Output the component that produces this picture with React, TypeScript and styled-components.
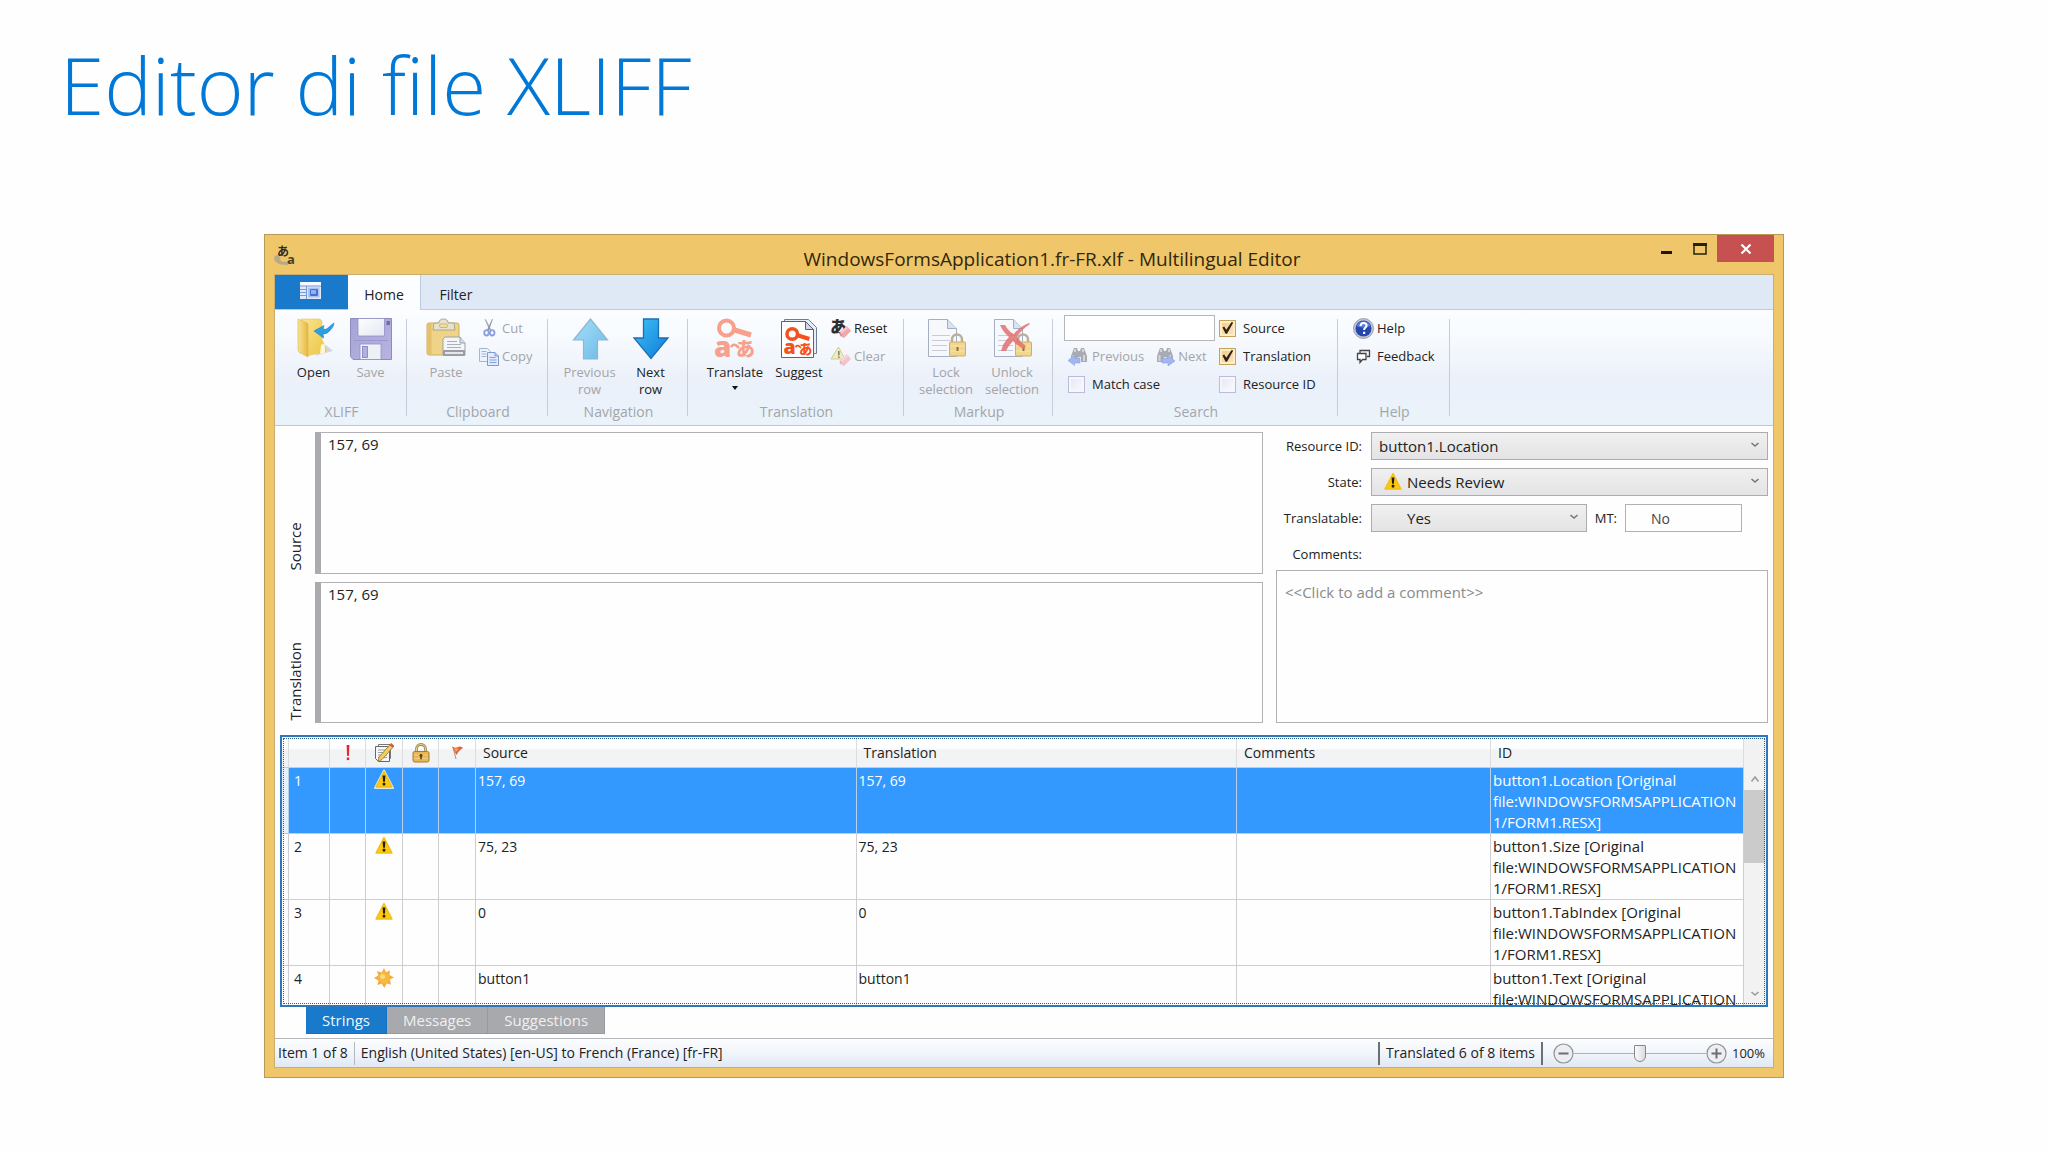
import React, { useState } from 'react';
import styled, { createGlobalStyle, css } from 'styled-components';

const GlobalStyle = createGlobalStyle`
  *, *::before, *::after { box-sizing: border-box; }
  body { margin: 0; background: #fefefe; }
  svg { overflow: visible; }
  body, button, input, select, textarea {
    font-family: "Open Sans", "Noto Sans", "Noto Sans CJK JP", sans-serif;
    color: #222;
  }
`;

/* ---------- page and window frame ---------- */

const Slide = styled.main`
  min-height: 100vh;
  padding: 30px 264px 74px;
`;

const SlideTitle = styled.h1`
  margin: 0 0 96px -204px;
  font-size: 80px;
  line-height: 108px;
  font-weight: 300;
  color: #0078d7;
`;

const Window = styled.section`
  border: 1px solid #b99a55;
  background: #efc76a;
  padding: 0 9px 9px;
`;

const TitleBar = styled.header`
  display: grid;
  grid-template-columns: 180px 1fr 124px;
  height: 39px;
`;

const AppIcon = styled.div`
  padding-top: 9px;
`;

const WindowTitle = styled.h2`
  margin: 0;
  text-align: center;
  font-size: 19px;
  line-height: 48px;
  font-weight: 400;
  color: #33260c;
  white-space: nowrap;
`;

const WindowButtons = styled.div`
  display: flex;
  align-items: flex-start;
  justify-content: flex-end;
`;

const WindowButton = styled.button<{ $close?: boolean }>`
  display: flex;
  align-items: center;
  justify-content: center;
  width: ${(p) => (p.$close ? 59 : 35)}px;
  height: 27px;
  padding: 1px 0 0;
  border: 0;
  background: ${(p) => (p.$close ? '#c75050' : 'transparent')};
`;

const Client = styled.div`
  border: 1px solid #c9ae72;
  background: #fefefe;
`;

/* ---------- ribbon ---------- */

const TabStrip = styled.nav`
  display: flex;
  height: 35px;
  background: #dfe8f5;
  border-bottom: 1px solid #bccbe0;
`;

const FileButton = styled.button`
  display: flex;
  justify-content: center;
  width: 73px;
  height: 34px;
  padding: 7px 2px 0 0;
  border: 0;
  background: #1979ca;
`;

const RibbonTab = styled.button<{ $active?: boolean }>`
  width: ${(p) => (p.$active ? 73 : 70)}px;
  height: ${(p) => (p.$active ? 35 : 34)}px;
  padding: 4px 0 0;
  border: 0;
  border-right: ${(p) => (p.$active ? '1px solid #bccbe0' : '0')};
  background: ${(p) => (p.$active ? '#fcfdff' : 'transparent')};
  font-size: 14px;
`;

const Ribbon = styled.div`
  display: flex;
  height: 116px;
  padding-top: 4px;
  border-bottom: 1px solid #b5cbd8;
  background: linear-gradient(#fbfdff 0%, #f5f9fe 30%, #ebf0f9 62%, #eaf3fb 100%);
`;

const Group = styled.section<{ $width: number; $pad: number }>`
  display: flex;
  flex-direction: column;
  width: ${(p) => p.$width}px;
  padding-left: ${(p) => p.$pad}px;
`;

const GroupTools = styled.div<{ $gap?: number }>`
  display: flex;
  gap: ${(p) => p.$gap ?? 0}px;
  height: 88px;
`;

const GroupCaption = styled.h3<{ $pad: number }>`
  margin: 0 0 0 -${(p) => p.$pad}px;
  padding-left: 2px;
  text-align: center;
  font-size: 14px;
  line-height: 20px;
  font-weight: 400;
  color: #a2a6ab;
`;

const Divider = styled.div`
  width: 1px;
  height: 97px;
  margin-top: 5px;
  background: #c6cdd8;
`;

const disabledText = css`
  &:disabled { color: #a4a4a7; }
`;

const LargeButton = styled.button<{ $width: number }>`
  display: flex;
  flex-direction: column;
  align-items: center;
  gap: 4px;
  width: ${(p) => p.$width}px;
  padding: 4px 0 0;
  border: 0;
  background: none;
  font-size: 13px;
  line-height: 17px;
  white-space: pre;
  ${disabledText}
`;

const Caret = styled.i`
  display: block;
  width: 0;
  margin: 5px auto 0;
  border: 3px solid transparent;
  border-top: 4px solid #111;
`;

const SmallColumn = styled.div`
  display: flex;
  flex-direction: column;
  align-items: flex-start;
`;

const SmallButton = styled.button`
  display: flex;
  align-items: center;
  gap: 3px;
  height: 28px;
  padding: 0;
  border: 0;
  background: none;
  font-size: 13px;
  white-space: nowrap;
  ${disabledText}
`;

const SearchGrid = styled.div`
  display: grid;
  grid-template-columns: 151px auto;
  grid-template-rows: repeat(3, 28px);
  column-gap: 4px;
  align-items: center;
`;

const SearchBox = styled.input`
  width: 100%;
  height: 26px;
  padding: 0 4px;
  border: 1px solid #b4b6ba;
  background: #fff;
  font-size: 13px;
`;

const SearchNav = styled.div`
  display: flex;
  gap: 10px;
  padding-left: 4px;
`;

const CheckLabel = styled.label<{ $inset?: boolean }>`
  display: flex;
  align-items: center;
  gap: 7px;
  padding-left: ${(p) => (p.$inset ? 4 : 0)}px;
  font-size: 13px;
  line-height: 24px;
  white-space: nowrap;
`;

const CheckBox = styled.input`
  appearance: none;
  display: grid;
  place-items: center;
  width: 17px;
  height: 17px;
  margin: 0;
  border: 1px solid #bcbcd8;
  background: linear-gradient(135deg, #e6e6f4, #fafaff);
  box-shadow: inset 0 0 0 2px #f6f6fd;

  &:checked {
    border-color: #c4a45c;
    background: linear-gradient(135deg, #f9c98b, #fde3c0);
    box-shadow: inset 0 0 0 2px #fdeec4;
  }
  &:checked::before {
    content: "";
    width: 12px;
    height: 12px;
    background: #2b2418;
    clip-path: polygon(8% 46%, 22% 38%, 40% 64%, 84% 0%, 98% 4%, 46% 98%, 34% 98%);
  }
`;

/* ---------- editing area ---------- */

const Workspace = styled.div`
  display: grid;
  grid-template-columns: 1fr 492px;
  column-gap: 13px;
  padding: 6px 5px 0 0;
`;

const Editors = styled.div`
  display: flex;
  flex-direction: column;
  gap: 8px;
`;

const EditorRow = styled.div`
  display: grid;
  grid-template-columns: 40px 1fr;
  flex: 1;
`;

const SideLabel = styled.label`
  writing-mode: vertical-rl;
  transform: rotate(180deg);
  padding: 3px 10px 0 9px;
  font-size: 15px;
  line-height: 20px;
`;

const EditorText = styled.textarea`
  display: block;
  width: 100%;
  height: 100%;
  padding: 1px 7px;
  border: 1px solid #b3b1b5;
  border-left: 6px solid #abaaae;
  background: #fefefe;
  font-size: 15px;
  line-height: 20px;
  resize: none;
`;

const Properties = styled.form`
  display: flex;
  flex-direction: column;
  gap: 2px;
`;

const Fields = styled.div`
  display: grid;
  grid-template-columns: 86px 1fr;
  grid-auto-rows: 28px;
  gap: 8px 9px;
  align-items: center;
`;

const FieldLabel = styled.label`
  text-align: right;
  font-size: 13px;
  line-height: 20px;
  white-space: nowrap;
`;

const SelectFrame = styled.div`
  position: relative;
  flex: 1;
`;

const Select = styled.select<{ $inset?: boolean }>`
  appearance: none;
  display: block;
  width: 100%;
  height: 28px;
  padding: 0 30px 0 ${(p) => (p.$inset ? 35 : 7)}px;
  border: 1px solid #acacae;
  border-radius: 0;
  background: linear-gradient(#f0f0f0, #e4e3e5);
  font-size: 15px;
`;

const SelectIcon = styled.span<{ $side: 'left' | 'right' }>`
  position: absolute;
  top: 0;
  ${(p) => p.$side}: ${(p) => (p.$side === 'left' ? 12 : 8)}px;
  display: flex;
  align-items: center;
  height: 26px;
  pointer-events: none;
`;

const FieldRow = styled.div`
  display: flex;
  align-items: center;
  gap: 8px;
  padding-right: 26px;
`;

const MtBox = styled.input`
  width: 117px;
  height: 28px;
  padding: 0 25px;
  border: 1px solid #b1b0b4;
  background: #fefefe;
  font-size: 14px;
  color: #444;
`;

const CommentBox = styled.textarea`
  height: 153px;
  padding: 11px 8px;
  border: 1px solid #b1b0b4;
  background: #fefefe;
  font-size: 15px;
  line-height: 21px;
  resize: none;
  &::placeholder { color: #8a8a8c; opacity: 1; }
`;

/* ---------- string list ---------- */

const ListPanel = styled.div`
  display: flex;
  height: 272px;
  margin: 12px 5px 0;
  border: 2px solid #2e77b8;
  outline: 1px dotted #2f5f8c;
  outline-offset: -4px;
`;

const ListView = styled.div`
  flex: 1;
  overflow: hidden;
  border-top: 1px solid #fff;
`;

const Table = styled.table`
  width: 100%;
  table-layout: fixed;
  border-collapse: separate;
  border-spacing: 0;
  font-size: 15px;
`;

const Col = styled.col<{ $width?: number }>`
  width: ${(p) => (p.$width ? `${p.$width}px` : 'auto')};
`;

const HeadCell = styled.th<{ $icon?: boolean }>`
  height: 30px;
  padding: ${(p) => (p.$icon ? '0' : '0 7px')};
  border-right: 1px solid #dcdde0;
  border-bottom: 1px solid #c9cdd3;
  background: linear-gradient(#ffffff 0%, #fdfdfd 35%, #f3f3f3 42%, #f1f3f7 100%);
  text-align: ${(p) => (p.$icon ? 'center' : 'left')};
  font-size: 14px;
  font-weight: 400;
  line-height: 20px;
  svg { display: block; margin: 0 auto; }
`;

const Row = styled.tr<{ $selected?: boolean }>`
  ${(p) =>
    p.$selected &&
    css`
      td { background: #3399ff; color: #fff; border-color: #b9cfe8; }
      td:first-child { background: #e6f1fb; }
    `}
`;

const Cell = styled.td<{ $kind?: 'icon' | 'number' | 'edge' | 'id' }>`
  height: 66px;
  padding: ${(p) => (p.$kind === 'number' ? '2px 5px' : p.$kind === 'icon' || p.$kind === 'edge' ? '2px 0' : '2px 0 0 2px')};
  border-right: 1px solid #cfcdd1;
  border-bottom: 1px solid #cfcdd1;
  vertical-align: top;
  font-size: ${(p) => (p.$kind === 'id' ? 15 : 14)}px;
  line-height: 21px;
  overflow-wrap: ${(p) => (p.$kind === 'id' ? 'anywhere' : 'normal')};
  svg { display: block; margin: 0 auto; }
`;

const ScrollBar = styled.div`
  display: flex;
  flex-direction: column;
  width: 22px;
  padding: 31px 1px 0 0;
  background: #f2f2f2;
`;

const ScrollArrow = styled.button`
  display: flex;
  align-items: center;
  justify-content: center;
  height: 22px;
  padding: 0;
  border: 0;
  background: none;
`;

const ScrollTrack = styled.div`
  flex: 1;
`;

const ScrollThumb = styled.div`
  height: 73px;
  background: #cbcbcb;
`;

const BottomTabs = styled.nav`
  display: flex;
  padding: 0 0 4px 31px;
`;

const BottomTab = styled.button<{ $active?: boolean }>`
  height: 27px;
  padding: 0 16px;
  border: 1px solid ${(p) => (p.$active ? '#1470bf' : '#98999c')};
  border-top: 0;
  border-left: 0;
  background: ${(p) => (p.$active ? '#1979ca' : '#a7a9ac')};
  color: ${(p) => (p.$active ? '#f2f8fd' : '#f0f0f1')};
  font-size: 15px;
  line-height: 24px;
`;

/* ---------- status bar ---------- */

const StatusBar = styled.footer`
  display: flex;
  align-items: center;
  height: 29px;
  padding: 0 8px 0 3px;
  border-top: 1px solid #b4b8bd;
  background: linear-gradient(#fcfdfe, #f1f5fb 50%, #e1e8f3);
  font-size: 14px;
  line-height: 20px;
  white-space: nowrap;
`;

const StatusLine = styled.i<{ $strong?: boolean }>`
  width: ${(p) => (p.$strong ? 2 : 1)}px;
  height: 23px;
  margin: 0 6px;
  background: ${(p) => (p.$strong ? '#6a7078' : '#b4b8bf')};
`;

const Spacer = styled.span`
  flex: 1;
`;

const ZoomButton = styled.button`
  display: flex;
  padding: 0;
  margin: 0;
  border: 0;
  background: none;
`;

const ZoomGroup = styled.div`
  display: flex;
  align-items: center;
  padding-left: 4px;
`;

const ZoomSlider = styled.input`
  appearance: none;
  width: 132px;
  height: 18px;
  margin: 0;
  background: linear-gradient(#a9b4c2, #a9b4c2) center / 100% 1px no-repeat;
  &::-webkit-slider-thumb {
    appearance: none;
    width: 12px;
    height: 17px;
    border: 1px solid #83878c;
    border-radius: 1px 1px 6px 6px;
    background: linear-gradient(90deg, #fbfbfb, #dadcdf);
  }
`;

const ZoomValue = styled.output`
  padding-left: 5px;
  font-size: 13px;
`;

/* ---------- drawings ---------- */

const JP = '"Noto Sans CJK JP", sans-serif';
const LATIN = '"Open Sans", sans-serif';

const Warning = ({ glow }: { glow?: boolean }) => (
  <svg width="20" height="19" viewBox="0 0 20 19" aria-hidden="true">
    {glow && <path d="M10 0.5 19 18H1Z" fill="#e6ecd0" stroke="#dfe9da" strokeWidth="2" strokeLinejoin="round" />}
    <path d="M10 1.5 18 17H2Z" fill="#fcc90f" stroke="#f3be18" strokeWidth="1.4" strokeLinejoin="round" />
    <path d="M8.6 5.5h2.8l-.5 6.3H9.1Z" fill="#221a05" />
    <rect x="8.700" y="12.800" width="2.600" height="2.600" rx=".6" fill="#221a05" />
  </svg>
);

const Burst = () => (
  <svg width="20" height="20" viewBox="0 0 20 20" aria-hidden="true">
    <path
      d="M10 0 11.9 4.3 16 2.6 15.4 7 20 9.6 15.8 11.6 17 16.6 12.6 15.6 10.3 20 7.8 15.8 3.2 17 4.6 12.4 0 10 4.3 7.6 3 3 7.8 4.4Z"
      fill="#f3ad3a"
    />
    <circle cx="10" cy="10" r="5.4" fill="#f9b93f" />
    <circle cx="8.6" cy="8.6" r="2.4" fill="#fdd987" />
  </svg>
);

const Padlock = () => (
  <svg width="18" height="20" viewBox="0 0 18 20" aria-hidden="true">
    <path d="M4.5 9V6a4.500 4.500 0 0 1 9 0V9" fill="none" stroke="#9c8a52" strokeWidth="2.800" />
    <path d="M4.5 9V6a4.500 4.500 0 0 1 9 0V9" fill="none" stroke="#e2cf8e" strokeWidth="1.200" />
    <rect x="1" y="8.500" width="16" height="10.500" rx="1.600" fill="#e9b653" stroke="#a67b2d" />
    <path d="M2 12h14M2 15.500h14" stroke="#f4cf80" strokeWidth="1" />
    <path d="M9 11a1.500 1.500 0 0 1 .8 2.800v2.400H8.200v-2.400A1.500 1.500 0 0 1 9 11Z" fill="#5c4214" />
  </svg>
);

const AppLogo = () => (
  <svg width="22" height="23" viewBox="0 0 22 23" aria-hidden="true">
    <path d="M2 12c-1 5 4 8 9 7l3 1M2 12l4 3M1 14l2 3 4 1" fill="none" stroke="#b9a888" strokeWidth="3" />
    <text x="3" y="12" fontSize="12" fontWeight="700" fontFamily={JP} fill="#2e2a24">あ</text>
    <text x="13" y="20" fontSize="13" fontWeight="700" fontFamily={LATIN} fill="#4a3d2b">a</text>
  </svg>
);

const FileMenuIcon = () => (
  <svg width="21" height="17" viewBox="0 0 21 17" aria-hidden="true">
    <rect x="0" y="0" width="21" height="17" fill="#dfe9fa" />
    <rect x="0" y="0" width="21" height="3.5" fill="#f6f9ff" />
    <path d="M0 4h21M0 7.5h7M0 10.5h7M0 13.5h7M6.5 4v13" stroke="#6b93d6" strokeWidth=".9" />
    <rect x="8" y="5.5" width="11.5" height="10" fill="#a9c1f0" />
    <rect x="10" y="7" width="8" height="7" rx="1" fill="#4a6fd0" />
    <rect x="11" y="8" width="5" height="4" fill="#8fb0f4" />
  </svg>
);

const FolderOpen = () => (
  <svg width="42" height="42" viewBox="0 0 42 42" aria-hidden="true">
    <defs>
      <linearGradient id="fo1" x1="0" x2="1"><stop offset="0" stopColor="#f8e296" /><stop offset="1" stopColor="#e5b93f" /></linearGradient>
      <linearGradient id="fo2" x1="0" x2="1" y2="1"><stop offset="0" stopColor="#f9e591" /><stop offset="1" stopColor="#ecc444" /></linearGradient>
    </defs>
    <path d="M22 38 40 33 33 27Z" fill="#c9c9cf" opacity=".7" />
    <path d="M8 1h19l2 2v19l4 8v4l-18 3.500Z" fill="url(#fo2)" stroke="#e7c75e" strokeWidth=".6" />
    <path d="M5 1 14 5q1 .6 1 2v32L6.500 34.500Q5 33.500 5 32Z" fill="url(#fo1)" stroke="#dcb447" strokeWidth=".6" />
    <path d="M28 27q4-3 4 2v6l-5 1Z" fill="#fdf6cf" />
    <path d="M21 13 31 7.500 30 11q3 1 5-1 3-3 6-5 0 3-3 6.500-4 5-8 4.500L30.500 20Z" fill="#2c9fe0" stroke="#1c7fc0" strokeWidth=".6" />
  </svg>
);

const Floppy = () => (
  <svg width="42" height="42" viewBox="0 0 42 42" aria-hidden="true">
    <defs>
      <linearGradient id="fl1" x1="0" x2="1" y2="1"><stop offset="0" stopColor="#a5a3d6" /><stop offset="1" stopColor="#b9b3e2" /></linearGradient>
      <linearGradient id="fl2" x1="0" x2="1" y2="1"><stop offset="0" stopColor="#ffffff" /><stop offset="1" stopColor="#e3e6f2" /></linearGradient>
    </defs>
    <path d="M.5 .5h41v41H3l-2.500-3Z" fill="url(#fl1)" stroke="#8c8abf" />
    <rect x="8" y=".5" width="26.500" height="17.500" rx="1" fill="url(#fl2)" stroke="#8f8fc4" strokeWidth=".8" />
    <rect x="36.500" y="3" width="3.500" height="4" fill="#6f6ca8" />
    <rect x="4" y="22" width="34" height="1" fill="#9a97cf" />
    <rect x="10" y="26" width="21" height="15.500" fill="#eef0f8" stroke="#8f8fc4" strokeWidth=".8" />
    <rect x="12.500" y="28.500" width="5" height="11" fill="#b0b0e0" stroke="#7f7fb8" strokeWidth=".8" />
  </svg>
);

const Clipboard = () => (
  <svg width="42" height="42" viewBox="0 0 42 42" aria-hidden="true">
    <rect x="2" y="5" width="32" height="32" rx="2" fill="#efd487" stroke="#cfae5c" />
    <rect x="2.500" y="5.500" width="4" height="31" fill="#e4c06c" />
    <path d="M9 5h5q0-4 4.500-4T23 5h6l1 7H8Z" fill="#e6e2cf" stroke="#aba68c" />
    <rect x="14.500" y="6" width="8" height="3.500" rx="1.500" fill="#f6df9d" stroke="#b4a468" strokeWidth=".7" />
    <path d="M20 19h15l5 6v12H18V21Z" fill="#f3f5f9" stroke="#9da1a8" />
    <path d="M35 19v6h5" fill="#d6dae2" stroke="#9da1a8" />
    <path d="M22 23.500h10M22 26.500h14M22 29.500h14" stroke="#aab1bd" />
    <path d="M18 32h22v6H18Z" fill="#9a9da4" />
    <path d="M20 34h18v2H20Z" fill="#e5e7eb" />
  </svg>
);

const Scissors = () => (
  <svg width="20" height="20" viewBox="0 0 20 20" aria-hidden="true">
    <path d="M5.500 1 7 1.500 12.500 12 10.500 12.500Z" fill="#a7abb4" />
    <path d="M14 1 13 1.200 8 12l1.500 1Z" fill="#8e929b" />
    <ellipse cx="7.500" cy="14.800" rx="2.300" ry="2.700" fill="none" stroke="#8ea0dc" strokeWidth="1.800" />
    <ellipse cx="13.200" cy="14.800" rx="2.300" ry="2.700" fill="none" stroke="#8ea0dc" strokeWidth="1.800" />
  </svg>
);

const CopyPages = () => (
  <svg width="20" height="20" viewBox="0 0 20 20" aria-hidden="true">
    <path d="M.5 2.500h8l3 3v10H.5Z" fill="#eef3fb" stroke="#a3b6d6" />
    <path d="M2.500 5.500h5M2.500 8h5M2.500 10.500h5" stroke="#9cb4e0" />
    <path d="M8.500 6.500h7.500l3.500 3.500v9.500h-11Z" fill="#e3ecfb" stroke="#8199cf" />
    <path d="M16 6.500V10h3.500" fill="#bccdf0" stroke="#8199cf" />
    <path d="M10.500 11.500h6M10.500 14h7M10.500 16.500h7" stroke="#7f9fe2" />
  </svg>
);

const ArrowDrawing = ({ down }: { down?: boolean }) => (
  <svg width="42" height="42" viewBox="0 0 42 42" aria-hidden="true">
    <defs>
      <linearGradient id={down ? 'ad' : 'au'} x1="0" x2="1" y2="1">
        <stop offset="0" stopColor={down ? '#3fc0f6' : '#a4e0f8'} />
        <stop offset="1" stopColor={down ? '#0f7ad8' : '#6db9e8'} />
      </linearGradient>
    </defs>
    {down ? (
      <path d="M13.500 1h15v19H38L21 40.500 4 20h9.500Z" fill="url(#ad)" stroke="#1b6fb4" strokeWidth="1.300" />
    ) : (
      <path d="M21.500 1 38.500 22H28.500v19h-14V22H4.500Z" fill="url(#au)" stroke="#8fb6cf" strokeWidth="1.200" />
    )}
  </svg>
);

const TranslateGlyph = ({ color, stroke = 4 }: { color: string; stroke?: number }) => (
  <g>
    <circle cx="12.500" cy="10" r="7.500" fill="none" stroke={color} strokeWidth={stroke} />
    <path d="M19 11.500 37 17" stroke={color} strokeWidth={stroke + 1} fill="none" />
    <text x="0" y="39" fontSize="28" fontWeight="800" fontFamily={LATIN} fill={color}>a</text>
    <path d="M17 29q3-4 6-1l2 2" stroke={color} strokeWidth="2.500" fill="none" />
    <text x="22" y="38" fontSize="19" fontWeight="900" fontFamily={JP} fill={color}>あ</text>
  </g>
);

const TranslateIcon = () => (
  <svg width="42" height="42" viewBox="0 0 42 42" aria-hidden="true">
    <TranslateGlyph color="#f7a18c" />
  </svg>
);

const SuggestIcon = () => (
  <svg width="42" height="42" viewBox="0 0 42 42" aria-hidden="true">
    <path d="M6.500 1.500h24l8 8v26H6.500Z" fill="#e8edf6" stroke="#6d7d98" />
    <path d="M3.500 3.500h24l8 8v28h-32Z" fill="#fff" stroke="#53637f" />
    <path d="M27.500 3.500v8h8Z" fill="#cfd8e8" stroke="#53637f" />
    <g transform="translate(5.500 9) scale(.7)">
      <TranslateGlyph color="#f4511e" stroke={5} />
    </g>
  </svg>
);

const Eraser = () => (
  <g>
    <path d="M9 14 16 8l4 5-7 7-3-1.500Z" fill="#f2a5ad" />
    <path d="M9 14 16 8l1.500 2-7 6Z" fill="#f7c3c8" />
    <path d="M9 14l2 3-1 1.500-1.500-2Z" fill="#e48590" />
  </g>
);

const ResetIcon = () => (
  <svg width="20" height="20" viewBox="0 0 20 20" aria-hidden="true">
    <text x="-1" y="15" fontSize="17" fontWeight="900" fontFamily={JP} fill="#2d2d2d">あ</text>
    <Eraser />
  </svg>
);

const ClearIcon = () => (
  <svg width="20" height="20" viewBox="0 0 20 20" aria-hidden="true" opacity=".6">
    <path d="M7.500 1 14 13H0Z" fill="#ece98c" stroke="#b5b36a" />
    <path d="M7 5h1.600v4.500H7ZM7 10.500h1.600v1.500H7Z" fill="#3d3d2d" />
    <Eraser />
  </svg>
);

const LockPage = ({ crossed }: { crossed?: boolean }) => (
  <svg width="42" height="42" viewBox="0 0 42 42" aria-hidden="true">
    <path d="M3.500 1.500h19l9 9v28h-28Z" fill="#f6f8fc" stroke="#a3b0c4" />
    <path d="M22.500 1.500v9h9" fill="#d9e2ef" stroke="#a3b0c4" />
    <path d="M7 17.500h18M7 22.500h18M7 27.500h15M7 32.500h15" stroke="#c6ccd8" />
    <path d="M27 24v-2.500a4.500 4.500 0 0 1 10 0V24" fill="none" stroke="#b9b197" strokeWidth="2.500" />
    <rect x="24.500" y="24" width="16" height="14" rx="1" fill="#f2d48b" stroke="#cbb06a" />
    <path d="M25 28h15M25 33h15" stroke="#f9e6b4" />
    <path d="M31.500 29h2v4h-2Z" fill="#8b7135" />
    {crossed && (
      <path d="M9 7l5 0q4 7 9 9 5-7 15-11l1 1q-9 6-13 13 4 6 9 9l-2 3q-7-3-11-8-5 5-7 10l-5 0q2-8 8-14-6-5-9-12Z" fill="#e2706f" opacity=".85" />
    )}
  </svg>
);

const Binoculars = ({ forward }: { forward?: boolean }) => (
  <svg width="21" height="20" viewBox="0 0 21 20" aria-hidden="true">
    <path d="M6 2h3l1 3h2l1-3h3l3 8v6h-6v-5h-3v5H3v-6Z" fill="#a9abb2" />
    <path d="M6 3h2v3H6ZM14 3h2v3h-2ZM4.500 9h2v6h-2ZM15 9h2v6h-2Z" fill="#d3d5da" />
    {forward ? (
      <path d="M8 12h6V9l7 6-7 5v-3H8Z" fill="#a3b7ee" stroke="#8ba2e2" strokeWidth=".6" />
    ) : (
      <path d="M12 12H6.500V9L0 14.500 6.500 19.500V17H12Z" fill="#a3b7ee" stroke="#8ba2e2" strokeWidth=".6" />
    )}
  </svg>
);

const HelpIcon = () => (
  <svg width="21" height="21" viewBox="0 0 21 21" aria-hidden="true">
    <circle cx="10.500" cy="10.500" r="10" fill="#c3c6cf" stroke="#8c8f99" strokeWidth=".8" />
    <circle cx="10.500" cy="10.500" r="8" fill="#2547ad" />
    <path d="M3.500 8a7.500 7.500 0 0 1 14 0q-7 3-14 0Z" fill="#5d7fd6" />
    <path d="M7.600 8q.1-3 3-3t3 2.600c0 2-2.500 2-2.500 4.400" fill="none" stroke="#fff" strokeWidth="2" />
    <rect x="10" y="13.800" width="2.200" height="2.200" fill="#fff" />
  </svg>
);

const FeedbackIcon = () => (
  <svg width="21" height="20" viewBox="0 0 21 20" aria-hidden="true">
    <path d="M7 7V4.500h9.500v6H14" fill="none" stroke="#444" strokeWidth="1.300" />
    <path d="M4.500 7.500H13v6H9.500L7 16.500v-3H4.500Z" fill="#fff" stroke="#444" strokeWidth="1.300" />
  </svg>
);

const Exclamation = () => (
  <svg width="8" height="18" viewBox="0 0 8 18" aria-hidden="true">
    <path d="M2.600 1h2.800l-.5 11H3.100Z" fill="#e8252b" />
    <rect x="2.800" y="13.500" width="2.400" height="2.600" fill="#e8252b" />
  </svg>
);

const NotePencil = () => (
  <svg width="21" height="22" viewBox="0 0 21 22" aria-hidden="true">
    <path d="M4.500 2.500h12v14h-12Z" fill="#fff" stroke="#777" />
    <path d="M1.500 4.500h14v15h-11l-3-3Z" fill="#f7f7f7" stroke="#666" />
    <path d="M4 8h9M4 10.500h9M4 13h9M4 15.500h9" stroke="#9aa0aa" />
    <path d="M17 1.500 20 4 8 17.500l-4 2 1-4.500Z" fill="#f2ce5c" stroke="#8a7230" strokeWidth=".8" />
    <path d="M17 1.500 20 4l-1.500 1.800-3-2.500Z" fill="#e0525c" />
  </svg>
);

const Flag = () => (
  <svg width="12" height="16" viewBox="0 0 12 16" aria-hidden="true">
    <path d="M2 2 5 14" stroke="#a98f80" strokeWidth="1" />
    <path d="M1 1.500q3 2 6 .5t5 1q-4 2-6.500 7Z" fill="#e65f35" />
    <path d="M3 3q3 1 5 .3L5 7Z" fill="#f9a36c" />
  </svg>
);

const Chevron = ({ up, color = '#77777a' }: { up?: boolean; color?: string }) => (
  <svg width="10" height="8" viewBox="0 0 10 8" aria-hidden="true">
    <path d={up ? 'M1.500 6.500 5 2l3.500 4.500' : 'M1.500 2 5 5l3.500-3'} fill="none" stroke={color} strokeWidth="1.600" />
  </svg>
);

const ZoomGlyph = ({ plus }: { plus?: boolean }) => (
  <svg width="21" height="21" viewBox="0 0 21 21" aria-hidden="true">
    <circle cx="10.500" cy="10.500" r="9.500" fill="#eceef1" stroke="#8f9399" strokeWidth="1.200" />
    <path d={plus ? 'M5.500 10.500h10M10.500 5.500v10' : 'M5.500 10.500h10'} stroke="#6b6f75" strokeWidth="2" />
  </svg>
);

/* ---------- data ---------- */

const FILE = 'file:WINDOWSFORMSAPPLICATION1/FORM1.RESX]';

const strings = [
  { state: 'review', text: '157, 69', id: 'button1.Location' },
  { state: 'review', text: '75, 23', id: 'button1.Size' },
  { state: 'review', text: '0', id: 'button1.TabIndex' },
  { state: 'new', text: 'button1', id: 'button1.Text' },
];

function RibbonGroup(props: { width: number; pad: number; gap?: number; caption: string; children: React.ReactNode }) {
  return (
    <>
      <Group $width={props.width} $pad={props.pad}>
        <GroupTools $gap={props.gap}>{props.children}</GroupTools>
        <GroupCaption $pad={props.pad}>{props.caption}</GroupCaption>
      </Group>
      <Divider />
    </>
  );
}

function Check(props: { label: string; checked?: boolean; inset?: boolean }) {
  return (
    <CheckLabel $inset={props.inset}>
      <CheckBox type="checkbox" defaultChecked={props.checked} />
      {props.label}
    </CheckLabel>
  );
}

export default function App() {
  const [selected, setSelected] = useState(0);

  return (
    <>
      <GlobalStyle />
      <Slide>
        <SlideTitle>Editor di file XLIFF</SlideTitle>
        <Window>
          <TitleBar>
            <AppIcon><AppLogo /></AppIcon>
            <WindowTitle>WindowsFormsApplication1.fr-FR.xlf - Multilingual Editor</WindowTitle>
            <WindowButtons>
              <WindowButton aria-label="Minimize">
                <svg width="12" height="14" viewBox="0 0 12 14"><rect x="0" y="9" width="11" height="3" fill="#1d1708" /></svg>
              </WindowButton>
              <WindowButton aria-label="Maximize">
                <svg width="14" height="12" viewBox="0 0 14 12"><path d="M1 1h12v10H1Z" fill="none" stroke="#2a210c" strokeWidth="1.500" /><path d="M0 1.500h14" stroke="#2a210c" strokeWidth="3" /></svg>
              </WindowButton>
              <WindowButton $close aria-label="Close">
                <svg width="12" height="12" viewBox="0 0 12 12"><path d="M1.500 1.500l9 9M10.500 1.500l-9 9" stroke="#fff" strokeWidth="2.200" /></svg>
              </WindowButton>
            </WindowButtons>
          </TitleBar>

          <Client>
            <TabStrip>
              <FileButton aria-label="Application menu"><FileMenuIcon /></FileButton>
              <RibbonTab $active>Home</RibbonTab>
              <RibbonTab>Filter</RibbonTab>
            </TabStrip>

            <Ribbon>
              <RibbonGroup width={131} pad={10} caption="XLIFF">
                <LargeButton $width={57}><FolderOpen />Open</LargeButton>
                <LargeButton $width={57} disabled><Floppy />Save</LargeButton>
              </RibbonGroup>
              <RibbonGroup width={140} pad={8} gap={2} caption="Clipboard">
                <LargeButton $width={62} disabled><Clipboard />Paste</LargeButton>
                <SmallColumn>
                  <SmallButton disabled><Scissors />Cut</SmallButton>
                  <SmallButton disabled><CopyPages />Copy</SmallButton>
                </SmallColumn>
              </RibbonGroup>
              <RibbonGroup width={139} pad={11} caption="Navigation">
                <LargeButton $width={61} disabled><ArrowDrawing />{'Previous\nrow'}</LargeButton>
                <LargeButton $width={61}><ArrowDrawing down />{'Next\nrow'}</LargeButton>
              </RibbonGroup>
              <RibbonGroup width={215} pad={15} caption="Translation">
                <LargeButton $width={64}><TranslateIcon /><span>Translate<Caret /></span></LargeButton>
                <LargeButton $width={64}><SuggestIcon />Suggest</LargeButton>
                <SmallColumn>
                  <SmallButton><ResetIcon />Reset</SmallButton>
                  <SmallButton disabled><ClearIcon />Clear</SmallButton>
                </SmallColumn>
              </RibbonGroup>
              <RibbonGroup width={148} pad={9} caption="Markup">
                <LargeButton $width={66} disabled><LockPage />{'Lock\nselection'}</LargeButton>
                <LargeButton $width={66} disabled><LockPage crossed />{'Unlock\nselection'}</LargeButton>
              </RibbonGroup>
              <RibbonGroup width={284} pad={11} caption="Search">
                <SearchGrid>
                  <SearchBox aria-label="Search text" />
                  <Check label="Source" checked />
                  <SearchNav>
                    <SmallButton disabled><Binoculars />Previous</SmallButton>
                    <SmallButton disabled><Binoculars forward />Next</SmallButton>
                  </SearchNav>
                  <Check label="Translation" checked />
                  <Check label="Match case" inset />
                  <Check label="Resource ID" />
                </SearchGrid>
              </RibbonGroup>
              <RibbonGroup width={111} pad={15} caption="Help">
                <SmallColumn>
                  <SmallButton><HelpIcon />Help</SmallButton>
                  <SmallButton><FeedbackIcon />Feedback</SmallButton>
                </SmallColumn>
              </RibbonGroup>
            </Ribbon>

            <Workspace>
              <Editors>
                <EditorRow>
                  <SideLabel htmlFor="source">Source</SideLabel>
                  <EditorText id="source" defaultValue="157, 69" />
                </EditorRow>
                <EditorRow>
                  <SideLabel htmlFor="translation">Translation</SideLabel>
                  <EditorText id="translation" defaultValue="157, 69" />
                </EditorRow>
              </Editors>

              <Properties>
                <Fields>
                  <FieldLabel htmlFor="resource">Resource ID:</FieldLabel>
                  <SelectFrame>
                    <Select id="resource"><option>button1.Location</option></Select>
                    <SelectIcon $side="right"><Chevron /></SelectIcon>
                  </SelectFrame>
                  <FieldLabel htmlFor="state">State:</FieldLabel>
                  <SelectFrame>
                    <Select id="state" $inset><option>Needs Review</option></Select>
                    <SelectIcon $side="left"><Warning /></SelectIcon>
                    <SelectIcon $side="right"><Chevron /></SelectIcon>
                  </SelectFrame>
                  <FieldLabel htmlFor="translatable">Translatable:</FieldLabel>
                  <FieldRow>
                    <SelectFrame>
                      <Select id="translatable" $inset><option>Yes</option></Select>
                      <SelectIcon $side="right"><Chevron /></SelectIcon>
                    </SelectFrame>
                    <FieldLabel htmlFor="mt">MT:</FieldLabel>
                    <MtBox id="mt" readOnly value="No" />
                  </FieldRow>
                  <FieldLabel htmlFor="comments">Comments:</FieldLabel>
                </Fields>
                <CommentBox id="comments" placeholder="<<Click to add a comment>>" />
              </Properties>
            </Workspace>

            <ListPanel>
              <ListView>
                <Table>
                  <colgroup>
                    <Col $width={7} />
                    <Col $width={41} />
                    <Col $width={36} />
                    <Col $width={37} />
                    <Col $width={36} />
                    <Col $width={37} />
                    <Col />
                    <Col />
                    <Col $width={254} />
                    <Col $width={253} />
                  </colgroup>
                  <thead>
                    <tr>
                      <HeadCell $icon />
                      <HeadCell $icon />
                      <HeadCell $icon><Exclamation /></HeadCell>
                      <HeadCell $icon><NotePencil /></HeadCell>
                      <HeadCell $icon><Padlock /></HeadCell>
                      <HeadCell $icon><Flag /></HeadCell>
                      <HeadCell>Source</HeadCell>
                      <HeadCell>Translation</HeadCell>
                      <HeadCell>Comments</HeadCell>
                      <HeadCell>ID</HeadCell>
                    </tr>
                  </thead>
                  <tbody>
                    {strings.map((s, i) => (
                      <Row key={s.id} $selected={i === selected} onClick={() => setSelected(i)}>
                        <Cell $kind="edge" />
                        <Cell $kind="number">{i + 1}</Cell>
                        <Cell />
                        <Cell $kind="icon">{s.state === 'review' ? <Warning glow={i === selected} /> : <Burst />}</Cell>
                        <Cell />
                        <Cell />
                        <Cell>{s.text}</Cell>
                        <Cell>{s.text}</Cell>
                        <Cell />
                        <Cell $kind="id">{s.id} [Original<br />{FILE}</Cell>
                      </Row>
                    ))}
                  </tbody>
                </Table>
              </ListView>
              <ScrollBar>
                <ScrollArrow aria-label="Scroll up"><Chevron up color="#9b9b9d" /></ScrollArrow>
                <ScrollTrack><ScrollThumb /></ScrollTrack>
                <ScrollArrow aria-label="Scroll down"><Chevron color="#9b9b9d" /></ScrollArrow>
              </ScrollBar>
            </ListPanel>

            <BottomTabs>
              <BottomTab $active>Strings</BottomTab>
              <BottomTab>Messages</BottomTab>
              <BottomTab>Suggestions</BottomTab>
            </BottomTabs>

            <StatusBar>
              <span>Item 1 of 8</span>
              <StatusLine />
              <span>English (United States) [en-US] to French (France) [fr-FR]</span>
              <Spacer />
              <StatusLine $strong />
              <span>Translated 6 of 8 items</span>
              <StatusLine $strong />
              <ZoomGroup>
                <ZoomButton aria-label="Zoom out"><ZoomGlyph /></ZoomButton>
                <ZoomSlider type="range" aria-label="Zoom" min="0" max="200" defaultValue="100" />
                <ZoomButton aria-label="Zoom in"><ZoomGlyph plus /></ZoomButton>
                <ZoomValue>100%</ZoomValue>
              </ZoomGroup>
            </StatusBar>
          </Client>
        </Window>
      </Slide>
    </>
  );
}
